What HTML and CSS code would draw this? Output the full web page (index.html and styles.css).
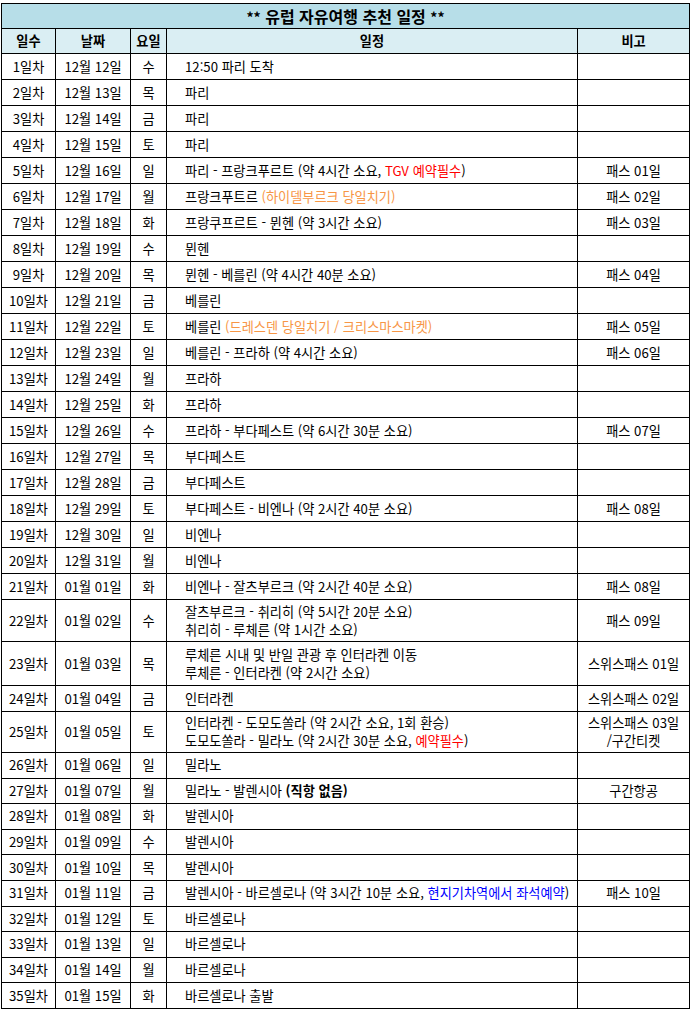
FILE: index.html
```html
<!DOCTYPE html>
<html lang="ko">
<head>
<meta charset="utf-8">
<link rel="stylesheet" href="styles.css">
</head>
<body>
<div class="wrap">
<table class="plan">
<colgroup>
<col class="c-day"><col class="c-date"><col class="c-dow"><col class="c-plan"><col class="c-note">
</colgroup>
<thead>
<tr class="title-row"><th colspan="5"><span class="stars">**</span> 유럽 자유여행 추천 일정 <span class="stars">**</span></th></tr>
<tr class="head-row"><th>일수</th><th>날짜</th><th>요일</th><th>일정</th><th>비고</th></tr>
</thead>
<tbody>
<tr><td>1일차</td><td>12월 12일</td><td>수</td><td class="plan-cell">12:50 파리 도착</td><td></td></tr>
<tr><td>2일차</td><td>12월 13일</td><td>목</td><td class="plan-cell">파리</td><td></td></tr>
<tr><td>3일차</td><td>12월 14일</td><td>금</td><td class="plan-cell">파리</td><td></td></tr>
<tr><td>4일차</td><td>12월 15일</td><td>토</td><td class="plan-cell">파리</td><td></td></tr>
<tr><td>5일차</td><td>12월 16일</td><td>일</td><td class="plan-cell">파리 - 프랑크푸르트 (약 4시간 소요, <span class="red">TGV 예약필수</span>)</td><td>패스 01일</td></tr>
<tr><td>6일차</td><td>12월 17일</td><td>월</td><td class="plan-cell">프랑크푸트르 <span class="orange">(하이델부르크 당일치기)</span></td><td>패스 02일</td></tr>
<tr><td>7일차</td><td>12월 18일</td><td>화</td><td class="plan-cell">프랑쿠프르트 - 뮌헨 (약 3시간 소요)</td><td>패스 03일</td></tr>
<tr><td>8일차</td><td>12월 19일</td><td>수</td><td class="plan-cell">뮌헨</td><td></td></tr>
<tr><td>9일차</td><td>12월 20일</td><td>목</td><td class="plan-cell">뮌헨 - 베를린 (약 4시간 40분 소요)</td><td>패스 04일</td></tr>
<tr><td>10일차</td><td>12월 21일</td><td>금</td><td class="plan-cell">베를린</td><td></td></tr>
<tr><td>11일차</td><td>12월 22일</td><td>토</td><td class="plan-cell">베를린 <span class="orange">(드레스덴 당일치기 / 크리스마스마켓)</span></td><td>패스 05일</td></tr>
<tr><td>12일차</td><td>12월 23일</td><td>일</td><td class="plan-cell">베를린 - 프라하 (약 4시간 소요)</td><td>패스 06일</td></tr>
<tr><td>13일차</td><td>12월 24일</td><td>월</td><td class="plan-cell">프라하</td><td></td></tr>
<tr><td>14일차</td><td>12월 25일</td><td>화</td><td class="plan-cell">프라하</td><td></td></tr>
<tr><td>15일차</td><td>12월 26일</td><td>수</td><td class="plan-cell">프라하 - 부다페스트 (약 6시간 30분 소요)</td><td>패스 07일</td></tr>
<tr><td>16일차</td><td>12월 27일</td><td>목</td><td class="plan-cell">부다페스트</td><td></td></tr>
<tr><td>17일차</td><td>12월 28일</td><td>금</td><td class="plan-cell">부다페스트</td><td></td></tr>
<tr><td>18일차</td><td>12월 29일</td><td>토</td><td class="plan-cell">부다페스트 - 비엔나 (약 2시간 40분 소요)</td><td>패스 08일</td></tr>
<tr><td>19일차</td><td>12월 30일</td><td>일</td><td class="plan-cell">비엔나</td><td></td></tr>
<tr><td>20일차</td><td>12월 31일</td><td>월</td><td class="plan-cell">비엔나</td><td></td></tr>
<tr><td>21일차</td><td>01월 01일</td><td>화</td><td class="plan-cell">비엔나 - 잘츠부르크 (약 2시간 40분 소요)</td><td>패스 08일</td></tr>
<tr class="h42"><td>22일차</td><td>01월 02일</td><td>수</td><td class="plan-cell">잘츠부르크 - 취리히 (약 5시간 20분 소요)<br>취리히 - 루체른 (약 1시간 소요)</td><td>패스 09일</td></tr>
<tr class="h44"><td>23일차</td><td>01월 03일</td><td>목</td><td class="plan-cell">루체른 시내 및 반일 관광 후 인터라켄 이동<br>루체른 - 인터라켄 (약 2시간 소요)</td><td>스위스패스 01일</td></tr>
<tr><td>24일차</td><td>01월 04일</td><td>금</td><td class="plan-cell">인터라켄</td><td>스위스패스 02일</td></tr>
<tr class="h41"><td>25일차</td><td>01월 05일</td><td>토</td><td class="plan-cell">인터라켄 - 도모도쏠라 (약 2시간 소요, 1회 환승)<br>도모도쏠라 - 밀라노 (약 2시간 30분 소요, <span class="red">예약필수</span>)</td><td>스위스패스 03일<br>/구간티켓</td></tr>
<tr class="tail"><td>26일차</td><td>01월 06일</td><td>일</td><td class="plan-cell">밀라노</td><td></td></tr>
<tr class="tail"><td>27일차</td><td>01월 07일</td><td>월</td><td class="plan-cell">밀라노 - 발렌시아 <b>(직항 없음)</b></td><td>구간항공</td></tr>
<tr class="tail"><td>28일차</td><td>01월 08일</td><td>화</td><td class="plan-cell">발렌시아</td><td></td></tr>
<tr class="tail"><td>29일차</td><td>01월 09일</td><td>수</td><td class="plan-cell">발렌시아</td><td></td></tr>
<tr class="tail"><td>30일차</td><td>01월 10일</td><td>목</td><td class="plan-cell">발렌시아</td><td></td></tr>
<tr class="tail"><td>31일차</td><td>01월 11일</td><td>금</td><td class="plan-cell">발렌시아 - 바르셀로나 (약 3시간 10분 소요, <span class="blue">현지기차역에서 좌석예약</span>)</td><td>패스 10일</td></tr>
<tr class="tail"><td>32일차</td><td>01월 12일</td><td>토</td><td class="plan-cell">바르셀로나</td><td></td></tr>
<tr class="tail"><td>33일차</td><td>01월 13일</td><td>일</td><td class="plan-cell">바르셀로나</td><td></td></tr>
<tr class="tail"><td>34일차</td><td>01월 14일</td><td>월</td><td class="plan-cell">바르셀로나</td><td></td></tr>
<tr class="tail"><td>35일차</td><td>01월 15일</td><td>화</td><td class="plan-cell">바르셀로나 출발</td><td></td></tr>
</tbody>
</table>
</div>
</body>
</html>
```
FILE: styles.css
```css
html, body {
  margin: 0;
  padding: 0;
  background: #ffffff;
}
.wrap {
  padding: 3px 0 0 1px;
}
.plan {
  border-collapse: collapse;
  table-layout: fixed;
  width: 689px;
  font-family: "Noto Sans CJK KR", "Noto Sans", sans-serif;
  font-size: 13.2px;
  color: #000000;
}
.c-day { width: 54px; }
.c-date { width: 75px; }
.c-dow { width: 36px; }
.c-plan { width: 411px; }
.c-note { width: 112px; }
.plan th, .plan td {
  border: 1px solid #000000;
  padding: 0;
  text-align: center;
  vertical-align: middle;
  line-height: 18px;
  white-space: nowrap;
  overflow: hidden;
}
.plan tr {
  height: 26px;
}
.plan tr.title-row {
  height: 25px;
}
.plan tr.head-row {
  height: 25px;
}
.title-row th {
  background: #b7dee8;
  font-size: 16px;
  font-weight: 700;
  line-height: 20px;
}
.title-row .stars {
  font-size: 14px;
}
.head-row th {
  background: #daeef3;
  font-weight: 700;
}
.plan td.plan-cell {
  text-align: left;
  padding-left: 18px;
}
.plan tr.h42 { height: 42px; }
.plan tr.h44 { height: 44px; }
.plan tr.h41 { height: 41px; }
.plan tr.tail { height: 25.6px; }
.red { color: #ff0000; }
.orange { color: #f79646; }
.blue { color: #0000ff; }
.plan b { font-weight: 700; }
```
